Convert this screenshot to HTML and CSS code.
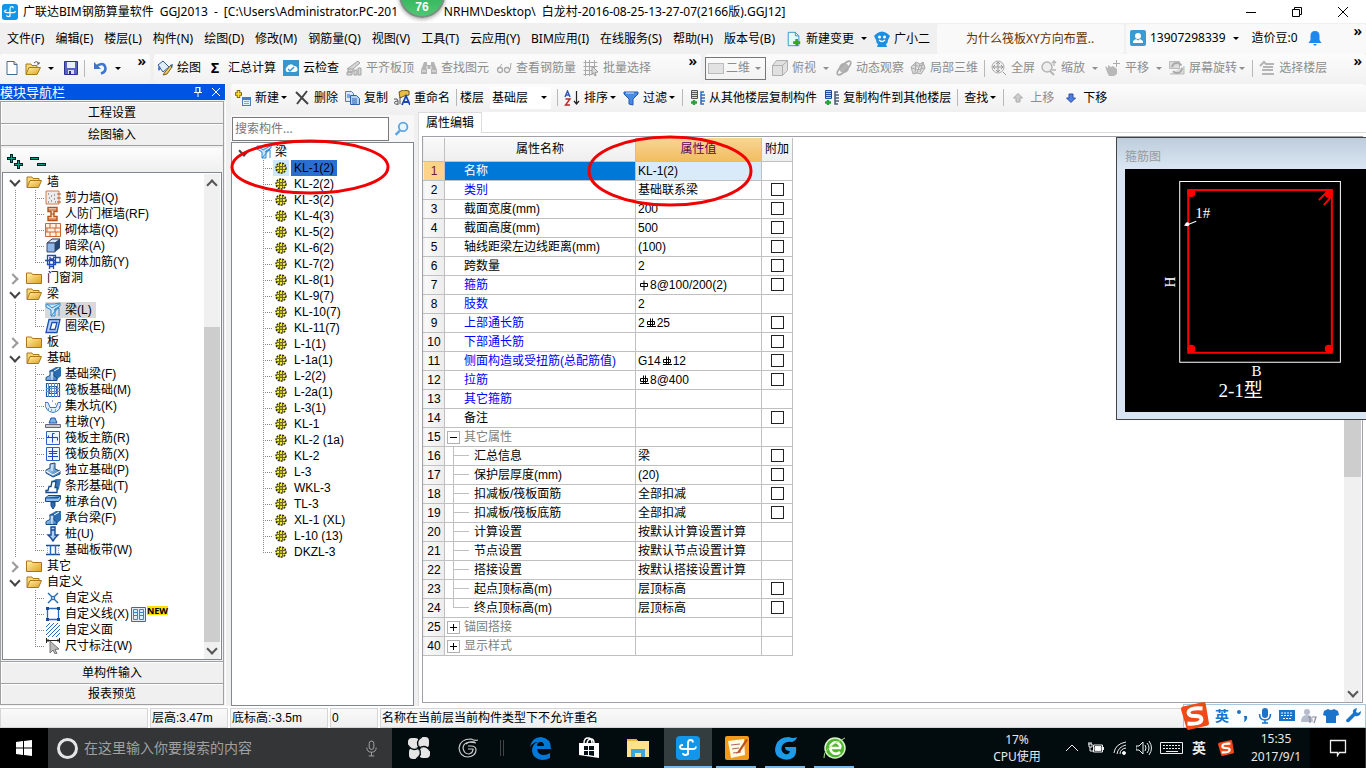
FILE: index.html
```html
<!DOCTYPE html>
<html lang="zh-CN">
<head>
<meta charset="utf-8">
<title>广联达BIM钢筋算量软件 GGJ2013</title>
<link rel="stylesheet" href="styles.css">
</head>
<body>
<svg class="defs" aria-hidden="true">
  <defs>
    <linearGradient id="gold" x1="0" y1="0" x2="1" y2="1"><stop offset="0" stop-color="#fff3a8"/><stop offset="1" stop-color="#e0a020"/></linearGradient>
    <linearGradient id="steel" x1="0" y1="0" x2="1" y2="1"><stop offset="0" stop-color="#d4ecff"/><stop offset="1" stop-color="#2c72b8"/></linearGradient>
  </defs>
  <symbol id="logo" viewBox="0 0 24 24"><rect width="24" height="24" rx="4" fill="#1296ea"/><path d="M12 19V7q0-3 2.500-3T17 6.500M12 16q0 3-2.500 3T7 17M7 9q-3 0-3 2t3 2h11q2-.5 2-2.500" fill="none" stroke="#fff" stroke-width="1.800"/></symbol>
  <symbol id="opened" viewBox="0 0 16 16"><path d="M1 13V3h5l1 1.500h6V7" fill="#f8d878" stroke="#a87818"/><path d="M1 13.500 4 6.500h11.500L12.500 13.500z" fill="url(#gold)" stroke="#a87818"/></symbol>
  <symbol id="closed" viewBox="0 0 16 16"><path d="M.5 13.500v-10.500h5l1 1.500h9v9z" fill="url(#gold)" stroke="#a87818"/></symbol>
  <symbol id="new" viewBox="0 0 16 16"><path d="M3 1.500h7l3 3v10H3z" fill="#fff" stroke="#456a94"/><path d="M10 1.500v3h3" fill="#c7d9ec" stroke="#456a94"/></symbol>
  <symbol id="open" viewBox="0 0 16 16"><path d="M1 14V4h5l1 1.500h5V8" fill="#f8d878" stroke="#a87818"/><path d="M1 14.500 4 7.500h11.500L12 14.500z" fill="url(#gold)" stroke="#a87818"/><path d="M9 3q3-3 5 1m0-2v2h-2" fill="none" stroke="#555"/></symbol>
  <symbol id="save" viewBox="0 0 16 16"><path d="M1.500 1.500h13v13H1.500z" fill="#5b62c4" stroke="#2c3290"/><path d="M4 2h8v6H4z" fill="#e7f0fb"/><path d="M5 10h6v4H5z" fill="#ddd"/><path d="M6 11h2v3H6z" fill="#2c3290"/></symbol>
  <symbol id="undo" viewBox="0 0 16 16"><path d="M4 6.500q7-5 9 0t-4 7" fill="none" stroke="#3c76ce" stroke-width="2.600"/><path d="M2 2v7h7z" fill="#3c76ce"/></symbol>
  <symbol id="draw" viewBox="0 0 16 16"><path d="M1 5 6 1l6 6-6 5z" fill="#dfeefa" stroke="#2d5d92"/><path d="M2 6q-2 3 0 5 2-2 1-5" fill="#3c76ce"/><path d="M14 5 8 12l-2 3 4-1 5-7z" fill="#f1cb62" stroke="#7c621c"/><path d="m13 5 3-1-1 4z" fill="#2d5d92"/></symbol>
  <symbol id="cloud" viewBox="0 0 16 16"><rect width="16" height="16" fill="#3596d0"/><path d="M4 12a3 3 0 0 1 0-5 4 4 0 0 1 7-1 3 3 0 0 1 1 6z" fill="#fff"/><path d="m5 9 2 2 4-4" fill="none" stroke="#3596d0" stroke-width="1.500"/></symbol>
  <symbol id="g-level" viewBox="0 0 16 16"><path d="M1 9 12 1l2 2-7 6M2 9h5v3H2zM1 12h5v3H1zM8 10h3v5H8zM12 8h3v7h-3z" fill="#d5d5d5" stroke="#a5a5a5"/></symbol>
  <symbol id="g-bino" viewBox="0 0 16 16"><path d="M3 2h3v3h4V2h3l3 8v4h-6V9H6v5H0v-4z" fill="#b4b4b4"/><path d="M6 6v3m4-3v3M1 11h4m6 0h4" stroke="#eee"/></symbol>
  <symbol id="g-glass" viewBox="0 0 16 16"><path d="M6 4 2 9m13-6-1 7" stroke="#a8a8a8"/><circle cx="4" cy="10" r="2.500" fill="none" stroke="#a8a8a8" stroke-width="1.300"/><circle cx="11" cy="10" r="2.500" fill="none" stroke="#a8a8a8" stroke-width="1.300"/></symbol>
  <symbol id="g-batch" viewBox="0 0 16 16"><path d="M.5 2.500h14M.5 6.500h14M.5 10.500h9M.5 14.500h9M2.500 0v16M6.500 0v16M11.500 0v9" stroke="#aaa"/><path d="m9 6 6 6-3 .5 1 3-1 .5-1.500-3L9 14z" fill="#ddd" stroke="#999"/></symbol>
  <symbol id="g-flat" viewBox="0 0 16 16"><rect x=".5" y="3.500" width="15" height="10" fill="#e2e2e2" stroke="#bbb"/></symbol>
  <symbol id="g-cube" viewBox="0 0 16 16"><path d="M.5 5.500h10v10H.5zl4-5h11l-5 5m5-5v10l-5 5v-10" fill="#e0e0e0" stroke="#b0b0b0"/></symbol>
  <symbol id="g-orbit" viewBox="0 0 16 16"><circle cx="8" cy="8" r="5" fill="#b5b5b5"/><ellipse cx="8" cy="8" rx="9" ry="3" transform="rotate(-45 8 8)" fill="none" stroke="#aaa" stroke-width="1.500"/></symbol>
  <symbol id="g-part" viewBox="0 0 16 16"><path d="M1 7 6 2l4 2 3-2 2 6-4 6-4-1-4 1zM6 2 5 13m5-9-3 9m6-11-3 10M1 8q7 3 14 0M3 5q5 2 11 0" fill="#ddd" stroke="#aaa"/></symbol>
  <symbol id="g-full" viewBox="0 0 16 16"><circle cx="7" cy="7" r="6" fill="#eee" stroke="#aaa"/><path d="M7 2v10M2 7h10M5 4l2-2 2 2M5 10l2 2 2-2M4 5 2 7l2 2m6-4 2 2-2 2m2 3 3 3" fill="none" stroke="#999"/></symbol>
  <symbol id="g-zoom" viewBox="0 0 16 16"><circle cx="6" cy="7" r="5" fill="#eee" stroke="#b5b5b5" stroke-width="1.500"/><path d="m9 11 4 4" stroke="#b5b5b5" stroke-width="2"/><path d="M13 1v5m-2-3 2-2 2 2m-4 7h4" fill="none" stroke="#b5b5b5" stroke-width="1.300"/></symbol>
  <symbol id="g-pan" viewBox="0 0 16 16"><path d="m0 6 3 2V5l3 2 2-1 4 3v5l-3 2H4l-2-4z" fill="#b8b8b8"/><path d="M11.500 0v7M8 3.500h7" stroke="#aaa"/></symbol>
  <symbol id="g-rot" viewBox="0 0 16 16"><path d="M.5 1.500h10v7H.5zM1 14h14V6" fill="#ddd" stroke="#bbb"/><circle cx="8" cy="8" r="5" fill="none" stroke="#aaa" stroke-width="2" stroke-dasharray="12 4"/></symbol>
  <symbol id="g-floor" viewBox="0 0 16 16"><path d="m1 6 4-4 2 2h8M4 7h10M3 10h11M3 14h12" fill="none" stroke="#b5b5b5" stroke-width="2"/></symbol>
  <symbol id="addnew" viewBox="0 0 16 16"><path d="M3.500 0v8M0 4h7" stroke="#8a6c00" stroke-width="3.500"/><path d="M3.500 1v6M1 4h5" stroke="#ffe33c" stroke-width="1.600"/><rect x="7.500" y="7.500" width="8" height="8" fill="#e5f0fd" stroke="#4a7cc0"/><path d="M8 9h7" stroke="#4a7cc0" stroke-width="2"/><path d="M9 11.500h5M9 13.500h5" stroke="#8ab"/></symbol>
  <symbol id="del" viewBox="0 0 16 16"><path d="m2 2 12 12M13 1 3 14" stroke="#444" stroke-width="2" fill="none"/></symbol>
  <symbol id="copy" viewBox="0 0 16 16"><path d="M1.500 1.500h6l2 2v8h-8z" fill="#dceafb" stroke="#4a7cc0"/><path d="M6.500 5.500h6l3 3v6h-9z" fill="#b4d2f4" stroke="#2c62b0"/><path d="M8 9h5M8 11h5M8 13h5M3 5h3M3 7h3" stroke="#2c62b0"/></symbol>
  <symbol id="ren" viewBox="0 0 16 16"><path d="M5 2 9 0l6 1v4l-5 1-4 2z" fill="#e8bd42" stroke="#715510"/><path d="m8 15 4-9 4 9m-6-3h5" fill="none" stroke="#1747b0" stroke-width="1.800"/><path d="M0 9q4-1 4 2v4M4 11q-4 0-3.500 2T4 14M6 7v7" fill="none" stroke="#555"/></symbol>
  <symbol id="az" viewBox="0 0 16 16"><path d="m1 7 2.500-6L6 7M2 5h3" fill="none" stroke="#3056b8" stroke-width="1.400"/><path d="M1.500 9H6l-4.500 6H6" fill="none" stroke="#b02a2a" stroke-width="1.400"/><path d="M12.500 1v13m-2.500-3 2.500 3 2.500-3" fill="none" stroke="#222" stroke-width="1.200"/></symbol>
  <symbol id="funnel" viewBox="0 0 16 16"><path d="M1 2h14v2l-5 5v6l-4-1V9L1 4z" fill="#4a8ae4" stroke="#2258b0"/><path d="M3 3h8" stroke="#cde4ff"/></symbol>
  <symbol id="cpf" viewBox="0 0 16 16"><path d="M2.500.5h6v8h-6z" fill="#ddd" stroke="#555"/><path d="M3 2.500h5M3 4.500h5M3 6.500h5" stroke="#555"/><path d="M5 10v5M2 12.500h6" stroke="#28a03c" stroke-width="2.400"/><path d="M15 2h-3v12h3M12 5h4m-4 3h4m-4 3h4" fill="none" stroke="#2b6cc0" stroke-width="1.500"/></symbol>
  <symbol id="cpt" viewBox="0 0 16 16"><path d="M2.500.5h6v8h-6z" fill="#b9d4ff" stroke="#2048a8"/><path d="M3 2.500h5M3 4.500h5M3 6.500h5" stroke="#2048a8"/><path d="M5 10v5M2 12.500h6" stroke="#28a03c" stroke-width="2.400"/><path d="M15 2h-3v12h3M12 5h4m-4 3h4m-4 3h4" fill="none" stroke="#4a5c78" stroke-width="1.500"/></symbol>
  <symbol id="up" viewBox="0 0 10 10"><path d="m5 .5 4.500 4.500H7v4H3V5H.5z" fill="#ccc" stroke="#aaa"/></symbol>
  <symbol id="down" viewBox="0 0 10 10"><path d="M5 9.500.5 5H3V1h4v4h2.500z" fill="#4c7fe0" stroke="#2a4fa8"/></symbol>
  <symbol id="change" viewBox="0 0 16 18"><path d="M1.500 1.500h8l4 4v11h-12z" fill="#eaf6fd" stroke="#2f8fc4"/><path d="M9.500 1.500v4h4" fill="none" stroke="#2f8fc4"/><path d="M11 9v8M7 13h8" stroke="#35a81a" stroke-width="3"/></symbol>
  <symbol id="robot" viewBox="0 0 16 16"><path d="M2 3q6-5 12 0l2 2-2 4q0 3-2 4l1 3H9H3l1-3q-2-1-2-4L0 5z" fill="#1c8fe0"/><circle cx="5.500" cy="6" r="1.500" fill="#fff"/><circle cx="10.500" cy="6" r="1.500" fill="#fff"/><path d="M5 9q3 3 6 0" stroke="#fff" fill="none" stroke-width="1.400"/></symbol>
  <symbol id="user" viewBox="0 0 16 16"><rect width="16" height="16" rx="2" fill="#3b9bd0"/><circle cx="8" cy="6" r="3" fill="#fff"/><path d="M3 13v-2l3-2 2 1.500L10 9l3 2v2z" fill="#fff"/></symbol>
  <symbol id="bell" viewBox="0 0 14 16"><path d="M7 1q4.500 0 4.500 5v4l2 3h-13l2-3V6Q2.500 1 7 1" fill="#1e88f0"/><path d="M5 14h4l-2 2z" fill="#1e88f0"/></symbol>
  <symbol id="mag" viewBox="0 0 14 14"><circle cx="8.500" cy="5.500" r="4" fill="#e8f5ff" stroke="#5aa5e4" stroke-width="1.700"/><path d="m5.500 9-4 4" stroke="#5aa5e4" stroke-width="2.200"/></symbol>
  <symbol id="t-shear" viewBox="0 0 16 16"><path d="M1 1h13v13H1z" fill="#ececec" stroke="#d27a48"/><path d="M3 4h1m2 2h1m2 3h1M4 8h1m1 3h1m3 1h1M3 12h1m5-7h1" stroke="#555"/><path d="M12 4h4m-4 4h4m-4 4h4" stroke="#b8501c"/></symbol>
  <symbol id="t-door" viewBox="0 0 16 16"><path d="M3 1.500h9v4H9v5h3v4H3v-4h3v-5H3z" fill="#fbe3cf" stroke="#b8501c" stroke-width="1.400"/><path d="M3 4h9M6 8h3m-6 5h9" stroke="#b8501c"/></symbol>
  <symbol id="t-brick" viewBox="0 0 16 16"><path d="M.5 1.500h15v13H.5zM.5 6h15M.5 10h15M5 2v4m5 0v4M5 10v4m6-12v4m-9 0v4m9 0v4" fill="#fff0e2" stroke="#c96830"/></symbol>
  <symbol id="t-dark" viewBox="0 0 16 16"><path d="m2 5 5-4h8l-5 4z" fill="#d5e8fb" stroke="#334"/><path d="M2 5h8v9H2z" fill="#8fb8e8" stroke="#446"/><path d="m10 5 5-4v9l-5 4z" fill="#27476f"/></symbol>
  <symbol id="t-rein" viewBox="0 0 16 16"><path d="M2.500 1.500h8v9h-8zM0 6.500h11M4.500 5v10M8.500 5v10M5 12.500h4M8 3.500h7v5H8M5 3v2h4" fill="none" stroke="#1d4bb5" stroke-width="1.300"/></symbol>
  <symbol id="t-beam" viewBox="0 0 16 16"><path d="M1 2h8l6-1v3l-5 3v7H6V8L1 5z" fill="#c9e6fb" stroke="#2e88d0"/><path d="m2 2 5 4 7-4M6 14 14 5M9 8l5-2v8" fill="none" stroke="#2e88d0"/></symbol>
  <symbol id="t-ring" viewBox="0 0 16 16"><path d="M4 1.500h11l-3 13H1zm3 3-2 7h5l2-7z" fill="#b8d4f5" fill-rule="evenodd" stroke="#1a4fb0" stroke-width="1.300"/></symbol>
  <symbol id="t-fb" viewBox="0 0 16 16"><path d="m4 5 7-4h5v9l-5 4" fill="#2c6cb0"/><path d="M1 14.500v-3l4-2V5h4v5l3 2v2.500z" fill="url(#steel)" stroke="#164b8a"/><path d="m9 5 5-3M7 6v8" stroke="#fff"/></symbol>
  <symbol id="t-raft" viewBox="0 0 16 16"><path d="M1.500 1.500h13v13h-13zM4.500 4.500h7v7h-7z" fill="none" stroke="#2058a8" stroke-width="1.200"/><path d="M6.500 1v14M9.500 1v14M1 6.500h14M1 9.500h14M3.500 1v14M12.500 1v14" fill="none" stroke="#5c8cd0"/></symbol>
  <symbol id="t-pit" viewBox="0 0 16 16"><path d="M0 4.500h3l2 5h6l2-5h3q0 9-8 10-8-1-8-10" fill="#dfedfb" stroke="#3578c8"/><path d="M3 11h1m2 1h1m3 0h1m-4-9h1m2 3h1m3 3h1" stroke="#2058a8"/></symbol>
  <symbol id="t-pier" viewBox="0 0 16 16"><path d="M4 9 6 4h4l2 5z" fill="#7ab0ec" stroke="#1d55a8"/><path d="M.5 10.500h15v3H.5z" fill="#c8ccd2" stroke="#667"/></symbol>
  <symbol id="t-main" viewBox="0 0 16 16"><path d="M1.500 1.500h13v13h-13z" fill="#edf5ff" stroke="#2f60c8"/><path d="M7.500 12.500v-9h2M3.500 5.500v2h9v3M2 7.500h3" fill="none" stroke="#1b48b8"/></symbol>
  <symbol id="t-neg" viewBox="0 0 16 16"><path d="M1.500 1.500h13v13h-13z" fill="#edf5ff" stroke="#2f60c8"/><path d="M7.500 2v12M3.500 5.500h9M3 10.500h10M4 7.500h8" fill="none" stroke="#1b48b8"/></symbol>
  <symbol id="t-ind" viewBox="0 0 16 16"><path d="m1 8 4-2V2l5-1v6l5 2v3l-7 3-7-4z" fill="url(#steel)" stroke="#17497f"/><path d="m1 9 7 4 7-4M7 3v6" fill="none" stroke="#fff"/></symbol>
  <symbol id="t-strip" viewBox="0 0 16 16"><path d="m6 4 5-3h5l-2 10-3 3" fill="#3a78b8"/><path d="M1 14.500v-2h2l1-4h2l1-5h4l-1 6h2v5z" fill="#fff" stroke="#164b8a" stroke-width="1.300"/></symbol>
  <symbol id="t-cap" viewBox="0 0 16 16"><path d="M.5 4 3 1.500h12.500V5l-2 2.500H.5z" fill="#8fc0ee" stroke="#174a88"/><path d="M.5 4H13l2-2M6 8v4l2 3 2-3V8z" fill="#2868b0" stroke="#174a88"/></symbol>
  <symbol id="t-pile" viewBox="0 0 16 16"><path d="M6 1h4v3H6zM6 4h4v5h3l-3 3-2 3-2-3-3-3h3z" fill="#a8d2f8" stroke="#174a98" stroke-width="1.400"/></symbol>
  <symbol id="t-slab" viewBox="0 0 16 16"><path d="M1 3.500h14M1 12.500h14" stroke="#174a98" stroke-width="1.400"/><path d="M5.500 3v10m5-10v10" stroke="#2668c0" stroke-width="1.400"/><path d="M2.500 4v8m11-8v8" stroke="#7aa8e0" stroke-dasharray="1 1"/></symbol>
  <symbol id="t-pt" viewBox="0 0 16 16"><path d="m3 3 10 10M13 3 3 13" stroke="#1f68b4" stroke-width="1.400"/><circle cx="8" cy="8" r="1.800" fill="#9be" stroke="#1f68b4"/></symbol>
  <symbol id="t-line" viewBox="0 0 16 16"><path d="M2.500 2.500h11v11h-11z" fill="none" stroke="#2668c0" stroke-width="1.300"/><path d="M1 1h3v3H1zm11 0h3v3h-3zM1 12h3v3H1zm11 0h3v3h-3z" fill="#164b9a"/></symbol>
  <symbol id="t-face" viewBox="0 0 16 16"><path d="m1 5 4-4M1 9l8-8M1 13 13 1M3 15 15 3M7 15l8-8M11 15l4-4" stroke="#2668c0"/></symbol>
  <symbol id="t-dim" viewBox="0 0 16 16"><path d="M1.500 0v5m13-5v5M2 2.500h12M3 1v3m10-3v3" stroke="#222"/><path d="m5 3 9 8-4 .5 2 4-2 .5-2-4-3 3z" fill="#bbb" stroke="#777"/></symbol>
  <symbol id="gear" viewBox="0 0 12 12"><circle cx="6" cy="6" r="5" fill="#f4ec28"/><circle cx="6" cy="6" r="5" fill="none" stroke="#222" stroke-width="1.400" stroke-dasharray="2 1"/><path d="M4.500 2v8M7.500 2v8M2 4.500h8M2 7.500h8" stroke="#6a6420"/><path d="M5.500 5.500h1v1h-1z" fill="#222"/></symbol>
  <symbol id="rebar1" viewBox="0 0 12 12"><path d="M2.500 4.500h7v3h-7zM6 1.500v10" fill="none" stroke="#000"/></symbol>
  <symbol id="rebar2" viewBox="0 0 12 12"><path d="M2.500 4.500h7v3h-7zM5.500 1.500v8M7.500 1.500v8M2 9.500h9" fill="none" stroke="#000"/></symbol>
  <symbol id="sogou" viewBox="0 0 26 26"><path d="M3 4 21 0q2 0 2 2l3 18q0 2-2 2L7 26q-2 0-2-2L0 7q0-3 3-3" fill="#f04a18"/><path d="M20 6Q7 5 7 10q0 3 6 3t6 3q0 5-13 4" fill="none" stroke="#fff" stroke-width="3.600"/></symbol>
</svg>

<div class="app">
  <header class="title">
    <svg class="i"><use href="#logo"/></svg>
    <h1><span>广联达BIM钢筋算量软件</span><span>GGJ2013</span><span>-</span><span class="path">[C:\Users\Administrator.PC-201</span><span>NRHM\Desktop\</span><span class="file">白龙村-2016-08-25-13-27-07(2166版).GGJ12]</span></h1>
    <div class="win">
      <button aria-label="最小化"><svg viewBox="0 0 10 10"><path d="M0 5.500h10"/></svg></button>
      <button aria-label="还原"><svg viewBox="0 0 10 10"><path d="M.5 2.500h7v7h-7zM2.500 2V.5h7v7H8"/></svg></button>
      <button aria-label="关闭"><svg viewBox="0 0 10 10"><path d="m0 0 10 10M10 0 0 10"/></svg></button>
    </div>
    <div class="ball">76</div>
  </header>

  <div class="menurow">
    <nav class="menu">
      <button>文件(F)</button><button>编辑(E)</button><button>楼层(L)</button><button>构件(N)</button><button>绘图(D)</button><button>修改(M)</button><button>钢筋量(Q)</button><button>视图(V)</button><button>工具(T)</button><button>云应用(Y)</button><button>BIM应用(I)</button><button>在线服务(S)</button><button>帮助(H)</button><button>版本号(B)</button>
      <button class="t"><svg class="i"><use href="#change"/></svg>新建变更<i class="dd"></i></button>
      <button class="t helper"><svg class="i"><use href="#robot"/></svg>广小二</button>
    </nav>
    <a class="tip" href="#">为什么筏板XY方向布置..</a>
    <div class="acct">
      <button class="t"><svg class="i"><use href="#user"/></svg>13907298339<i class="dd"></i></button>
      <span>造价豆:0</span>
      <svg class="i"><use href="#bell"/></svg>
      <button class="more" aria-label="更多">»</button>
    </div>
  </div>

  <div class="bars">
    <div class="bar b1">
      <button class="t" aria-label="新建"><svg class="i"><use href="#new"/></svg></button>
      <button class="t" aria-label="打开"><svg class="i"><use href="#open"/></svg><i class="dd"></i></button>
      <button class="t" aria-label="保存"><svg class="i"><use href="#save"/></svg></button>
      <i class="sep"></i>
      <button class="t" aria-label="撤销"><svg class="i"><use href="#undo"/></svg><i class="dd"></i></button>
      <button class="more" aria-label="更多">»</button>
    </div>
    <div class="bar b2">
      <button class="t"><svg class="i"><use href="#draw"/></svg>绘图</button>
      <button class="t"><b class="sum">Σ</b>汇总计算</button>
      <button class="t"><svg class="i"><use href="#cloud"/></svg>云检查</button>
      <button class="t" disabled><svg class="i"><use href="#g-level"/></svg>平齐板顶</button>
      <button class="t" disabled><svg class="i"><use href="#g-bino"/></svg>查找图元</button>
      <button class="t" disabled><svg class="i"><use href="#g-glass"/></svg>查看钢筋量</button>
      <button class="t" disabled><svg class="i"><use href="#g-batch"/></svg>批量选择</button>
      <button class="more" aria-label="更多">»</button>
    </div>
    <div class="bar b3">
      <button class="t boxed" disabled><svg class="i"><use href="#g-flat"/></svg>二维<i class="dd"></i></button>
      <button class="t" disabled><svg class="i"><use href="#g-cube"/></svg>俯视<i class="dd"></i></button>
      <button class="t" disabled><svg class="i"><use href="#g-orbit"/></svg>动态观察</button>
      <button class="t" disabled><svg class="i"><use href="#g-part"/></svg>局部三维</button>
      <i class="sep"></i>
      <button class="t" disabled><svg class="i"><use href="#g-full"/></svg>全屏</button>
      <button class="t" disabled><svg class="i"><use href="#g-zoom"/></svg>缩放<i class="dd"></i></button>
      <button class="t" disabled><svg class="i"><use href="#g-pan"/></svg>平移<i class="dd"></i></button>
      <button class="t" disabled><svg class="i"><use href="#g-rot"/></svg>屏幕旋转<i class="dd near"></i></button>
      <i class="sep"></i>
      <button class="t" disabled><svg class="i"><use href="#g-floor"/></svg>选择楼层</button>
      <button class="more" aria-label="更多">»</button>
    </div>
  </div>

  <main class="main">
    <aside class="nav">
      <div class="navtitle"><span>模块导航栏</span>
        <button aria-label="固定"><svg viewBox="0 0 10 10"><path d="M3 0v5.500M7 0v5.500M3 .5h4M1 5.500h8M5 6v4M6.500 0v5"/></svg></button>
        <button aria-label="关闭"><svg viewBox="0 0 10 10"><path d="m1 1 8 8M9 1 1 9"/></svg></button>
      </div>
      <button class="fold">工程设置</button>
      <button class="fold">绘图输入</button>
      <div class="navbox">
        <div class="navtools">
          <button aria-label="全部展开"><svg viewBox="0 0 16 16"><path d="M4.500 0v9M0 4.500h9M11.500 6v9M7 10.500h9" stroke="#022" stroke-width="3"/><path d="M4.500 1v7M1 4.500h7M11.500 7v7M8 10.500h7" stroke="#0a9a8a"/></svg></button>
          <button aria-label="全部折叠"><svg viewBox="0 0 16 16"><path d="M0 4.500h9M7 10.500h9" stroke="#022" stroke-width="3"/><path d="M1 4.500h7M8 10.500h7" stroke="#0a9a8a"/></svg></button>
        </div>
        <div class="treebox">
          <ul class="tree">
            <li class="o"><div class="n"><svg class="i"><use href="#opened"/></svg>墙</div>
              <ul>
                <li><svg class="i"><use href="#t-shear"/></svg><span>剪力墙(Q)</span></li>
                <li><svg class="i"><use href="#t-door"/></svg><span>人防门框墙(RF)</span></li>
                <li><svg class="i"><use href="#t-brick"/></svg><span>砌体墙(Q)</span></li>
                <li><svg class="i"><use href="#t-dark"/></svg><span>暗梁(A)</span></li>
                <li><svg class="i"><use href="#t-rein"/></svg><span>砌体加筋(Y)</span></li>
              </ul></li>
            <li class="c"><div class="n"><svg class="i"><use href="#closed"/></svg>门窗洞</div></li>
            <li class="o"><div class="n"><svg class="i"><use href="#opened"/></svg>梁</div>
              <ul>
                <li class="sel"><svg class="i"><use href="#t-beam"/></svg><span>梁(L)</span></li>
                <li><svg class="i"><use href="#t-ring"/></svg><span>圈梁(E)</span></li>
              </ul></li>
            <li class="c"><div class="n"><svg class="i"><use href="#closed"/></svg>板</div></li>
            <li class="o"><div class="n"><svg class="i"><use href="#opened"/></svg>基础</div>
              <ul>
                <li><svg class="i"><use href="#t-fb"/></svg><span>基础梁(F)</span></li>
                <li><svg class="i"><use href="#t-raft"/></svg><span>筏板基础(M)</span></li>
                <li><svg class="i"><use href="#t-pit"/></svg><span>集水坑(K)</span></li>
                <li><svg class="i"><use href="#t-pier"/></svg><span>柱墩(Y)</span></li>
                <li><svg class="i"><use href="#t-main"/></svg><span>筏板主筋(R)</span></li>
                <li><svg class="i"><use href="#t-neg"/></svg><span>筏板负筋(X)</span></li>
                <li><svg class="i"><use href="#t-ind"/></svg><span>独立基础(P)</span></li>
                <li><svg class="i"><use href="#t-strip"/></svg><span>条形基础(T)</span></li>
                <li><svg class="i"><use href="#t-cap"/></svg><span>桩承台(V)</span></li>
                <li><svg class="i"><use href="#t-fb"/></svg><span>承台梁(F)</span></li>
                <li><svg class="i"><use href="#t-pile"/></svg><span>桩(U)</span></li>
                <li><svg class="i"><use href="#t-slab"/></svg><span>基础板带(W)</span></li>
              </ul></li>
            <li class="c"><div class="n"><svg class="i"><use href="#closed"/></svg>其它</div></li>
            <li class="o end"><div class="n"><svg class="i"><use href="#opened"/></svg>自定义</div>
              <ul>
                <li><svg class="i"><use href="#t-pt"/></svg><span>自定义点</span></li>
                <li><svg class="i"><use href="#t-line"/></svg><span>自定义线(X)</span><svg class="book" viewBox="0 0 15 15"><path d="M.5.500h14v14H.5z" fill="#dceefc" stroke="#567"/><path d="M2.500 2.500h4v10h-4zm6 0h4v10h-4zM3 5.500h3M3 8.500h3m3-3h3m-3 3h3" fill="none" stroke="#2f86d8"/></svg><em>NEW</em></li>
                <li><svg class="i"><use href="#t-face"/></svg><span>自定义面</span></li>
                <li><svg class="i"><use href="#t-dim"/></svg><span>尺寸标注(W)</span></li>
              </ul></li>
          </ul>
          <div class="sb"><i class="au"></i><i class="thumb"></i><i class="ad"></i></div>
        </div>
      </div>
      <button class="fold">单构件输入</button>
      <button class="fold">报表预览</button>
    </aside>

    <div class="work">
      <div class="bar b4">
        <button class="t"><svg class="i"><use href="#addnew"/></svg>新建<i class="dd near"></i></button>
        <button class="t"><svg class="i"><use href="#del"/></svg>删除</button>
        <button class="t"><svg class="i"><use href="#copy"/></svg>复制</button>
        <button class="t"><svg class="i"><use href="#ren"/></svg>重命名</button>
        <i class="sep"></i>
        <label for="floor">楼层</label>
        <div class="combo"><select id="floor"><option>基础层</option></select><i class="dd"></i></div>
        <i class="sep"></i>
        <button class="t"><svg class="i"><use href="#az"/></svg>排序<i class="dd near"></i></button>
        <button class="t"><svg class="i"><use href="#funnel"/></svg>过滤<i class="dd near"></i></button>
        <i class="sep"></i>
        <button class="t"><svg class="i"><use href="#cpf"/></svg>从其他楼层复制构件</button>
        <button class="t"><svg class="i"><use href="#cpt"/></svg>复制构件到其他楼层</button>
        <i class="sep"></i>
        <button class="t">查找<i class="dd near"></i></button>
        <i class="sep"></i>
        <button class="t mv" disabled><svg class="s"><use href="#up"/></svg>上移</button>
        <button class="t mv"><svg class="s"><use href="#down"/></svg>下移</button>
      </div>

      <div class="panes">
        <section class="list">
          <div class="search"><input type="text" aria-label="搜索构件" placeholder="搜索构件..."><button aria-label="搜索"><svg><use href="#mag"/></svg></button></div>
          <div class="members">
            <div class="n root"><svg class="i"><use href="#t-beam"/></svg>梁</div>
            <ul>
              <li class="sel"><svg><use href="#gear"/></svg><span>KL-1(2)</span></li>
              <li><svg><use href="#gear"/></svg><span>KL-2(2)</span></li>
              <li><svg><use href="#gear"/></svg><span>KL-3(2)</span></li>
              <li><svg><use href="#gear"/></svg><span>KL-4(3)</span></li>
              <li><svg><use href="#gear"/></svg><span>KL-5(2)</span></li>
              <li><svg><use href="#gear"/></svg><span>KL-6(2)</span></li>
              <li><svg><use href="#gear"/></svg><span>KL-7(2)</span></li>
              <li><svg><use href="#gear"/></svg><span>KL-8(1)</span></li>
              <li><svg><use href="#gear"/></svg><span>KL-9(7)</span></li>
              <li><svg><use href="#gear"/></svg><span>KL-10(7)</span></li>
              <li><svg><use href="#gear"/></svg><span>KL-11(7)</span></li>
              <li><svg><use href="#gear"/></svg><span>L-1(1)</span></li>
              <li><svg><use href="#gear"/></svg><span>L-1a(1)</span></li>
              <li><svg><use href="#gear"/></svg><span>L-2(2)</span></li>
              <li><svg><use href="#gear"/></svg><span>L-2a(1)</span></li>
              <li><svg><use href="#gear"/></svg><span>L-3(1)</span></li>
              <li><svg><use href="#gear"/></svg><span>KL-1</span></li>
              <li><svg><use href="#gear"/></svg><span>KL-2 (1a)</span></li>
              <li><svg><use href="#gear"/></svg><span>KL-2</span></li>
              <li><svg><use href="#gear"/></svg><span>L-3</span></li>
              <li><svg><use href="#gear"/></svg><span>WKL-3</span></li>
              <li><svg><use href="#gear"/></svg><span>TL-3</span></li>
              <li><svg><use href="#gear"/></svg><span>XL-1 (XL)</span></li>
              <li><svg><use href="#gear"/></svg><span>L-10 (13)</span></li>
              <li><svg><use href="#gear"/></svg><span>DKZL-3</span></li>
            </ul>
          </div>
          <svg class="mark m1" viewBox="0 0 160 56"><ellipse cx="80" cy="28" rx="78" ry="26"/></svg>
        </section>

        <section class="editor">
          <div class="tabs"><button class="tab">属性编辑</button></div>
          <div class="sheet">
            <table>
              <colgroup><col class="c1"><col class="c2"><col class="c3"><col class="c4"></colgroup>
              <thead><tr><th></th><th>属性名称</th><th class="hot">属性值</th><th>附加</th></tr></thead>
              <tbody>
                <tr class="cur"><th>1</th><td>名称</td><td>KL-1(2)</td><td></td></tr>
                <tr class="b"><th>2</th><td>类别</td><td>基础联系梁</td><td><input type="checkbox" aria-label="类别"></td></tr>
                <tr><th>3</th><td>截面宽度(mm)</td><td>200</td><td><input type="checkbox" aria-label="截面宽度"></td></tr>
                <tr><th>4</th><td>截面高度(mm)</td><td>500</td><td><input type="checkbox" aria-label="截面高度"></td></tr>
                <tr><th>5</th><td>轴线距梁左边线距离(mm)</td><td>(100)</td><td><input type="checkbox" aria-label="轴线距离"></td></tr>
                <tr><th>6</th><td>跨数量</td><td>2</td><td><input type="checkbox" aria-label="跨数量"></td></tr>
                <tr class="b"><th>7</th><td>箍筋</td><td><svg class="rb"><use href="#rebar1"/></svg>8@100/200(2)</td><td><input type="checkbox" aria-label="箍筋"></td></tr>
                <tr class="b"><th>8</th><td>肢数</td><td>2</td><td></td></tr>
                <tr class="b"><th>9</th><td>上部通长筋</td><td>2<svg class="rb"><use href="#rebar2"/></svg>25</td><td><input type="checkbox" aria-label="上部通长筋"></td></tr>
                <tr class="b"><th>10</th><td>下部通长筋</td><td></td><td><input type="checkbox" aria-label="下部通长筋"></td></tr>
                <tr class="b"><th>11</th><td>侧面构造或受扭筋(总配筋值)</td><td>G14<svg class="rb"><use href="#rebar2"/></svg>12</td><td><input type="checkbox" aria-label="侧面构造或受扭筋"></td></tr>
                <tr class="b"><th>12</th><td>拉筋</td><td><svg class="rb"><use href="#rebar2"/></svg>8@400</td><td><input type="checkbox" aria-label="拉筋"></td></tr>
                <tr class="b"><th>13</th><td>其它箍筋</td><td></td><td></td></tr>
                <tr><th>14</th><td>备注</td><td></td><td><input type="checkbox" aria-label="备注"></td></tr>
                <tr class="g"><th>15</th><td><button class="ex open" aria-label="折叠"></button>其它属性</td><td></td><td></td></tr>
                <tr class="k"><th>16</th><td>汇总信息</td><td>梁</td><td><input type="checkbox" aria-label="汇总信息"></td></tr>
                <tr class="k"><th>17</th><td>保护层厚度(mm)</td><td>(20)</td><td><input type="checkbox" aria-label="保护层厚度"></td></tr>
                <tr class="k"><th>18</th><td>扣减板/筏板面筋</td><td>全部扣减</td><td><input type="checkbox" aria-label="扣减面筋"></td></tr>
                <tr class="k"><th>19</th><td>扣减板/筏板底筋</td><td>全部扣减</td><td><input type="checkbox" aria-label="扣减底筋"></td></tr>
                <tr class="k"><th>20</th><td>计算设置</td><td>按默认计算设置计算</td><td></td></tr>
                <tr class="k"><th>21</th><td>节点设置</td><td>按默认节点设置计算</td><td></td></tr>
                <tr class="k"><th>22</th><td>搭接设置</td><td>按默认搭接设置计算</td><td></td></tr>
                <tr class="k"><th>23</th><td>起点顶标高(m)</td><td>层顶标高</td><td><input type="checkbox" aria-label="起点顶标高"></td></tr>
                <tr class="k last"><th>24</th><td>终点顶标高(m)</td><td>层顶标高</td><td><input type="checkbox" aria-label="终点顶标高"></td></tr>
                <tr class="g"><th>25</th><td><button class="ex" aria-label="展开"></button>锚固搭接</td><td></td><td></td></tr>
                <tr class="g"><th>40</th><td><button class="ex" aria-label="展开"></button>显示样式</td><td></td><td></td></tr>
              </tbody>
            </table>
            <div class="sb sb2"><i class="thumb"></i><i class="ad"></i></div>
          </div>
          <svg class="mark m2" viewBox="0 0 166 72"><ellipse cx="83" cy="36" rx="81" ry="34"/></svg>
          <div class="stirrup">
            <div class="sttitle">箍筋图</div>
            <svg class="canvas" viewBox="0 0 240 242" preserveAspectRatio="xMinYMin">
              <path d="M54.500 12.500h160v180h-160z" fill="none" stroke="#fff"/>
              <path d="M63 21h143v162H63z" fill="none" stroke="#f00" stroke-width="2"/>
              <path d="m193 31 7-7m-2 12 7-8" stroke="#f00" stroke-width="2"/>
              <g fill="#f00"><circle cx="66" cy="24" r="4"/><circle cx="203" cy="25" r="4"/><circle cx="66" cy="179" r="4"/><circle cx="203" cy="179" r="4"/></g>
              <path d="M59 56h2l10-4" fill="none" stroke="#fff"/><circle cx="62" cy="55" r="2" fill="#fff"/>
              <text x="70" y="49">1#</text>
              <text x="126" y="206">B</text>
              <text transform="translate(50 118) rotate(-90)">H</text>
              <text class="big" x="93" y="227">2-1型</text>
            </svg>
          </div>
        </section>
      </div>
    </div>
  </main>

  <footer class="status">
    <span class="s1"></span><span class="s2">层高:3.47m</span><span class="s3">底标高:-3.5m</span><span class="s4">0</span><span class="s5">名称在当前层当前构件类型下不允许重名</span>
    <div class="ime">
      <svg class="sg"><use href="#sogou"/></svg>
      <b>英</b>
      <svg viewBox="0 0 16 16"><circle cx="4" cy="4" r="2"/><path d="M9 8h3q1 4-3 6 1-3 0-6"/></svg>
      <svg viewBox="0 0 16 16"><rect x="5" y="0" width="6" height="10" rx="3"/><path d="M2.500 6q0 6 5.500 6t5.500-6M8 12v3M5 15h6" fill="none" stroke="#1b74c9" stroke-width="1.500"/></svg>
      <svg viewBox="0 0 16 16"><path d="M0 2h16v11H0z"/><path d="M2 5h12M2 7.500h12M4 10.500h8" stroke="#fff" stroke-dasharray="2 1"/></svg>
      <svg viewBox="0 0 16 16"><g fill="#b4bccb"><circle cx="6" cy="4" r="3"/><path d="M0 14q0-7 6-7t6 7z"/></g><path d="M7 9h2v6m2-6h4l-2 6" fill="none" stroke="#889" stroke-width="1.200"/></svg>
      <svg viewBox="0 0 16 16"><path d="m1 3 4-2q3 2 6 0l4 2 1 4-3 1v7H3V8L0 7z"/></svg>
      <svg viewBox="0 0 16 16"><path d="m1 12 7-7q-1-4 4-5l-1 4 2 1 3-2q0 6-6 5l-6 6q-3 1-3-2"/></svg>
    </div>
  </footer>

  <div class="taskbar">
    <button class="start" aria-label="开始"><svg viewBox="0 0 16 16"><path d="m0 2 7-1v6.500H0zM8 1l8-1v7.500H8zM0 8.500h7V15l-7-1zm8 0h8V16l-8-1z" fill="#fff"/></svg></button>
    <div class="cortana"><i></i><input type="text" aria-label="搜索" placeholder="在这里输入你要搜索的内容"><svg viewBox="0 0 14 18"><rect x="4.500" y="1" width="5" height="9" rx="2.500"/><path d="M2 8q0 5 5 5t5-5M7 13v4M4 17h6"/></svg></div>
    <button class="app-i" aria-label="应用"><svg viewBox="0 0 24 24"><g fill="#e6e6e6"><rect x="1" y="2" width="11" height="10" rx="4"/><rect x="12" y="1" width="10" height="11" rx="4"/><rect x="2" y="12" width="10" height="11" rx="4"/><rect x="12" y="12" width="11" height="10" rx="4"/></g><path d="M12 12Q8 5 15 1M12 12q7-4 11 3M12 12q4 7-3 11M12 12q-7 4-11-3" fill="none" stroke="#020c0f" stroke-width="1.300"/></svg></button>
    <button class="app-i" aria-label="旋风"><svg viewBox="0 0 24 24" fill="none" stroke="#ccc" stroke-width="1.200"><path d="M22 4q-3 1-7-1Q4 3 3 12q1 9 9 9 8-1 8-7 0-4-5-4h-3M20 7Q8 4 7 12q1 6 6 6 4-1 4-5h-5M19 6q-6-1-9 2"/></svg></button>
    <i class="tsep"></i>
    <button class="app-i" aria-label="Edge"><svg viewBox="0 0 24 24"><path d="M2 11Q4 1 13 1q10 1 10 12H9q1 6 7 6 3 0 6-2v5q-3 2-8 2-9-1-10-9 0-7 6-9-5 0-8 5m7-1h7q0-4-3-4-4 0-4 4" fill="#0078d7"/></svg></button>
    <button class="app-i" aria-label="应用商店"><svg viewBox="0 0 24 24"><path d="M2 7h20v15L2 19z" fill="#fff"/><path d="M7 7q0-5 4-5t4 5M10 7q1-4 4-4t3 4" fill="none" stroke="#fff" stroke-width="1.500"/><path d="M7 10h4v4H7zm5 0h5v4h-5zm-5 5h4v4H7zm5 0h5v5l-5-1z" fill="#031015"/></svg></button>
    <button class="app-i" aria-label="文件资源管理器"><svg viewBox="0 0 24 24"><path d="M1 3h9l2 2h11v16H1z" fill="#ffe28a"/><path d="M1 3h9l2 2H1z" fill="#e8b83c"/><path d="M5 21v-8h14v8h-4v-4H9v4z" fill="#3aa6dc"/></svg></button>
    <button class="app-i act run" aria-label="广联达"><svg><use href="#logo"/></svg></button>
    <button class="app-i run" aria-label="笔记"><svg viewBox="0 0 24 24"><rect width="24" height="24" rx="2" fill="#f29a1c"/><path d="M3 5 19 3l1 16-14 3z" fill="#fffbe2"/><path d="m6 9 9-1m-8 5 7-1m-6 5 8-1" stroke="#a66"/><path d="m21 3-8 12-2 3 4-2 8-12z" fill="#c4511c"/></svg></button>
    <button class="app-i run" aria-label="浏览器"><svg viewBox="0 0 24 24"><path d="M23 1q-4 2-8 0Q5 1 2 9q-3 9 4 13 8 4 14-1 3-4 2-10H11q0 4 5 4-1 4-5 3-5-3-3-8 3-5 10-4 4-1 5-5" fill="#1e9be8"/></svg></button>
    <button class="app-i run" aria-label="360浏览器"><svg viewBox="0 0 24 24"><circle cx="12" cy="12" r="10" fill="#4eb72c" stroke="#d8f3cc" stroke-width="1.500"/><path d="M17 16q-3 3-7 1-4-3-2-8 4-5 8-1 2 2 1 4H8" fill="none" stroke="#fff" stroke-width="2.600"/><path d="M1 22Q-1 13 22 2" fill="none" stroke="#a2e078"/></svg></button>
    <div class="cpu"><span>17%</span><span>CPU使用</span></div>
    <div class="tray">
      <svg viewBox="0 0 16 16"><path d="m2 11 6-6 6 6"/></svg>
      <svg viewBox="0 0 16 16"><path d="M5.500 5h9v7h-9zM15.500 7v3M0 4h4v3H1V2m2 0v2M2 7v4h3"/><path d="M7 6.500h6v4H7z" fill="#fff"/></svg>
      <svg viewBox="0 0 16 16"><path d="M2 13Q3 4 14 2M5 14q1-7 9-9M8 14q0-5 6-6"/><circle cx="12" cy="13" r="1.500" fill="#fff"/></svg>
      <svg viewBox="0 0 16 16"><path d="M0 6h3l4-4v12l-4-4H0zM9 5q2 3 0 6m2-8q4 5 0 10m2-12q5 7 0 14"/></svg>
      <svg class="kb" viewBox="0 0 24 16"><path d="M.5 2.500h22v11H.5z"/><path d="M3 5.500h18M3 8.500h18" stroke-dasharray="2 1"/><path d="M6 11.500h12"/></svg>
      <b>英</b>
      <svg class="sg2"><use href="#sogou"/></svg>
    </div>
    <time><span>15:35</span><span>2017/9/1</span></time>
    <button class="note" aria-label="通知"><svg viewBox="0 0 18 18"><path d="M1.500 1.500h15v12h-6l-2 3v-3h-7z"/></svg></button>
  </div>
</div>
</body>
</html>
```
FILE: styles.css
```css
* { box-sizing: border-box; }
body { margin: 0; background: #f0f0f0; color: #000; font: 12px/16px "Noto Sans", "Noto Sans CJK SC", sans-serif; }
button, input, select { font: inherit; color: inherit; margin: 0; padding: 0; border: 0; background: none; border-radius: 0; }
ul { list-style: none; margin: 0; padding: 0; }
svg { flex: none; }
.defs { position: absolute; width: 0; height: 0; }
.i { width: 16px; height: 16px; display: block; }
.app { display: flex; flex-direction: column; height: 100vh; overflow: hidden; }

.title { position: relative; display: flex; align-items: center; height: 23px; flex: none; background: #fff; padding-left: 2px; gap: 5px; }
.title h1 { display: flex; gap: 6px; margin: 0; font-size: 12px; font-weight: 400; white-space: nowrap; flex: 1; }
.path { width: 214px; }
.win { display: flex; }
.win button { width: 46px; height: 22px; display: flex; align-items: center; justify-content: center; }
.win svg { width: 10px; height: 10px; fill: none; stroke: #000; overflow: visible; }
.ball { position: absolute; left: 399px; top: -28px; width: 46px; height: 46px; border-radius: 50%; background: linear-gradient(#1ea04a, #4cc870); border: 2px solid #7d8f84; box-shadow: 0 1px 4px #999; color: #fff; font: 700 12px/12px "Liberation Sans", sans-serif; text-align: center; padding-top: 27px; z-index: 3; }

.menurow { display: flex; height: 31px; flex: none; padding-top: 1px; gap: 2px; }
.menu { display: flex; align-items: center; gap: 11px; padding: 0 0 1px 7px; width: 935px; flex: none; white-space: nowrap; }
.helper { margin-left: -8px; }
.tip { display: flex; align-items: center; width: 187px; flex: none; padding-left: 29px; background: #f9f9f9; color: #663300; text-decoration: none; border-radius: 3px; white-space: nowrap; }
.acct { display: flex; align-items: center; flex: 1; gap: 9px; padding: 0 0 2px 4px; background: #f9f9f9; border-radius: 3px; white-space: nowrap; }
.t { display: flex; align-items: center; gap: 4px; white-space: nowrap; }
.t:disabled { color: #8d8d8d; }
.dd { width: 0; height: 0; border: 3px solid transparent; border-top-color: currentColor; border-bottom: 0; margin: 0 4px 0 3px; }
.dd.near { margin: 0 1px 0 -2px; }
.more { margin-left: auto; align-self: flex-start; font-size: 15px; line-height: 13px; font-weight: 600; padding: 0 4px; }

.bars { display: flex; gap: 4px; height: 30px; flex: none; }
.bar { display: flex; align-items: center; gap: 7px; background: linear-gradient(#fcfcfc, #f1f1f1); border-radius: 3px; white-space: nowrap; }
.bars .bar { padding-bottom: 2px; }
.b1 { width: 150px; padding-left: 4px; gap: 5px; flex: none; }
.b1 .sep { margin-right: 2px; }
.b2 { width: 547px; padding-left: 3px; flex: none; }
.b3 { flex: 1; gap: 6px; }
.b3 .t:not(.boxed) .dd:not(.near) { margin-right: 1px; }
.sum { width: 14px; font-size: 14px; text-align: center; }
.b2 .t:nth-child(2) { gap: 6px; }
.sep { width: 1px; height: 17px; background: #b8b8b8; }
.boxed { border: 1px solid #777; height: 23px; padding-left: 2px; gap: 2px; }

.main { display: flex; flex: 1; min-height: 0; gap: 5px; }
.nav { width: 226px; flex: none; display: flex; flex-direction: column; border-right: 1px solid #fff; }
.navtitle { display: flex; align-items: center; height: 16px; flex: none; background: #0054e3; color: #fff; font-size: 13px; }
.navtitle span { flex: 1; }
.navtitle button { width: 18px; display: flex; justify-content: center; }
.navtitle svg { width: 10px; height: 10px; fill: none; stroke: #fff; }
.fold { height: 22px; flex: none; border: 1px solid #a0a0a0; border-bottom-width: 0; background: #f0f0f0; margin-right: 1px; box-shadow: inset 1px 1px #fff; }
.fold:nth-of-type(1) { margin-top: 1px; }
.fold:last-child { border-bottom-width: 1px; margin-bottom: 1px; }
.navbox { flex: 1; min-height: 0; display: flex; flex-direction: column; border: 1px solid #a0a0a0; border-bottom: 0; padding: 2px 1px 1px; margin-right: 1px; }
.navtools { display: flex; gap: 7px; height: 24px; flex: none; padding: 3px 0 0 5px; background: linear-gradient(#fdfdfd, #efefef); }
.navtools svg { width: 16px; height: 16px; display: block; fill: none; }
.treebox { flex: 1; min-height: 0; display: flex; background: #fff; border: 1px solid #828790; padding-top: 1px; }
.tree, .members, table, .status, .fold, .tab { font-family: "Liberation Sans", "Noto Sans CJK SC", sans-serif; }
.tree { flex: 1; white-space: nowrap; }
.n { position: relative; display: flex; align-items: center; gap: 5px; height: 16px; padding-left: 23px; }
.o > .n::before, .c > .n::before, .root::before { content: ""; position: absolute; left: 8px; top: 3px; width: 6px; height: 6px; border: solid #444; border-width: 0 2px 2px 0; transform: rotate(45deg); }
.c > .n::before { left: 6px; top: 5px; border-color: #999; transform: rotate(-45deg); }
.tree ul { padding-left: 32px; background: repeating-linear-gradient(#888 0 1px, #fff 1px 2px) 12px 0 / 1px 100% no-repeat; }
.tree .end ul { background: none; }
.tree ul li, .members li { display: flex; align-items: center; height: 16px; background: repeating-linear-gradient(#888 0 1px, transparent 1px 2px) 0 0 / 1px 100% no-repeat; }
.tree ul li:last-child, .members li:last-child { background-size: 1px 50%; }
.tree ul li::before, .members li::before { content: ""; width: 10px; height: 1px; background: repeating-linear-gradient(90deg, #888 0 1px, transparent 1px 2px); }
.tree ul span { padding: 0 4px; }
.tree .sel .i, .tree .sel span { background-color: #d9d9d9; }
.book { width: 15px; height: 15px; margin-left: -2px; }
.tree em { font: 700 9px/9px "Noto Sans", sans-serif; background: #ffe000; margin: 0 0 8px 1px; }
.sb { width: 17px; display: flex; flex-direction: column; background: #f0f0f0; }
.tree + .sb { width: 16px; margin: 0 1px; }
.sb .thumb { background: #cdcdcd; }
.tree + .sb .thumb { margin-top: 136px; flex: 1; }
.au, .ad { height: 17px; display: flex; align-items: center; justify-content: center; }
.au::before, .ad::before { content: ""; width: 6px; height: 6px; border: solid #555; border-width: 0 2px 2px 0; transform: translateY(-2px) rotate(45deg); }
.au::before { transform: translateY(2px) rotate(225deg); }

.work { flex: 1; min-width: 0; display: flex; flex-direction: column; }
.b4 { height: 26px; flex: none; padding: 1px 0 0 4px; gap: 6px; }
.b4 .sep + label { margin-left: -3px; }
.combo { display: flex; align-items: center; height: 22px; background: #fff; width: 61px; }
.combo select { appearance: none; flex: 1; min-width: 0; padding-left: 2px; }
.s { width: 10px; height: 10px; }
.mv { gap: 7px; padding: 0 3px; }
.panes { flex: 1; min-height: 0; display: flex; gap: 4px; }
.list { position: relative; width: 183px; flex: none; display: flex; flex-direction: column; margin-top: 5px; }
.search { display: flex; align-items: center; height: 27px; flex: none; padding-left: 1px; gap: 5px; background: #f7f7f7; }
.search input { width: 157px; height: 24px; border: 1px solid #7a7a7a; background: #fff; padding-left: 2px; }
.search input::placeholder { color: #777; opacity: 1; }
.search svg { width: 15px; height: 15px; display: block; }
.members { flex: 1; background: #fff; border: 1px solid #828790; padding-top: 1px; }
.members .n { gap: 3px; padding-left: 24px; }
.members ul { padding-left: 31px; }
.members li svg { width: 12px; height: 12px; margin: 0 4px 0 2px; }
.members li span { padding: 0 3px; }
.members .sel span { background: #2a6fcf; color: #000; margin-right: 2px; }
.members .sel svg { outline: 2px solid #cce8ff; background: #cce8ff; }
.mark { position: absolute; pointer-events: none; z-index: 2; fill: none; stroke: #f00000; stroke-width: 3; }
.m1 { left: -1px; top: 24px; width: 160px; height: 56px; }
.m2 { left: 168px; top: 23px; width: 166px; height: 72px; }

.editor { position: relative; flex: 1; min-width: 0; display: flex; flex-direction: column; background: #fff; margin-top: 2px; border-left: 1px solid #dcdcdc; }
.tabs { height: 21px; flex: none; border-bottom: 1px solid #dcdcdc; }
.tab { width: 63px; height: 21px; background: #fff; border: solid #dcdcdc; border-width: 1px 1px 0 0; }
.sheet { flex: 1; min-height: 0; display: flex; justify-content: space-between; margin: 3px; border: 1px solid #a0a0a8; padding: 1px 1px 0 0; }
table { border-collapse: collapse; table-layout: fixed; width: 370px; align-self: flex-start; }
.c1 { width: 21px; } .c2 { width: 191px; } .c3 { width: 126px; } .c4 { width: 31px; }
th, td { border: 1px solid #c0c0c0; padding: 0; height: 19px; line-height: 16px; white-space: nowrap; font-weight: 400; }
th { background: linear-gradient(90deg, #fafafa, #ececec); border-left-color: #eee; }
thead th { height: 23px; background: linear-gradient(#fafafa, #eee); border-top: 0; }
thead .hot { background: linear-gradient(#f8d596, #f1bd60); color: #600060; }
td:nth-child(2) { padding-left: 19px; }
td:nth-child(3) { padding-left: 2px; }
td:nth-child(4) { text-align: center; }
.b td:nth-child(2) { color: #00f; }
.cur th { background: #ffd28a; color: #702030; }
.cur td:nth-child(2) { background: #0078d7; color: #fff; }
.cur td:nth-child(3) { background: #d9eaf9; }
.g td:nth-child(2) { padding-left: 2px; color: #808080; }
.k td:nth-child(2) { padding-left: 29px; background: linear-gradient(#c0c0c0, #c0c0c0) 8px 0 / 1px 100% no-repeat, linear-gradient(#c0c0c0, #c0c0c0) 8px 50% / 16px 1px no-repeat; }
.k.last td:nth-child(2) { background-size: 1px 50%, 16px 1px; }
td input { appearance: none; display: block; width: 13px; height: 13px; border: 1px solid #222; margin: 0 auto; background: #fff; }
.ex { display: inline-block; width: 13px; height: 13px; border: 1px solid #b0b0b0; margin-right: 4px; vertical-align: middle; background: linear-gradient(#000, #000) 50% / 7px 1px no-repeat, linear-gradient(#000, #000) 50% / 1px 7px no-repeat; }
.ex.open { background: linear-gradient(#000, #000) 50% / 7px 1px no-repeat; }
.rb { width: 12px; height: 12px; vertical-align: -2px; }
.sb2 { width: 17px; justify-content: flex-end; }
.sb2 .thumb { height: 57px; margin-bottom: 208px; }

.stirrup { position: absolute; left: 697px; right: 0; top: 25px; height: 283px; border: 1px solid #444; border-right: 0; background: linear-gradient(#becddc, #d9e5f2 30px); padding: 0 0 7px 8px; display: flex; flex-direction: column; z-index: 1; }
.sttitle { height: 31px; flex: none; padding-top: 11px; color: #9a9a9a; line-height: 16px; }
.canvas { flex: 1; min-height: 0; background: #000; }
.canvas text { fill: #fff; font: 15px "Liberation Serif", "Noto Sans CJK SC", serif; }
.canvas .big { font-size: 19px; }

.status { position: relative; display: flex; align-items: stretch; height: 22px; flex: none; gap: 2px; padding-top: 2px; background: #fff; }
.status span { border: 1px solid #d5d5d5; background: linear-gradient(#fafafa, #efefef); padding: 1px 1px 0; white-space: nowrap; }
.s1 { width: 148px; } .s2 { width: 78px; } .s3 { width: 98px; } .s4 { width: 48px; } .s5 { flex: 1; }
.ime { position: absolute; right: 0; top: -2px; width: 183px; height: 24px; background: #fbfdff; border: 1px solid #a8c8e0; display: flex; align-items: center; gap: 6px; z-index: 3; color: #1b74c9; }
.ime svg { width: 16px; height: 16px; fill: #1b74c9; }
.ime .sg { width: 28px; height: 28px; margin-left: -3px; }
.ime b, .tray b { font-size: 14px; }

.taskbar { display: flex; height: 40px; flex: none; background: #020c0f; color: #e8e8e8; }
.start { width: 48px; flex: none; background: #000; display: flex; align-items: center; justify-content: center; }
.start svg { width: 16px; height: 16px; }
.cortana { width: 344px; flex: none; display: flex; align-items: center; background: #333536; padding: 0 14px 0 9px; gap: 6px; }
.cortana i { width: 21px; height: 21px; border: 3px solid #e5e5e5; border-radius: 50%; }
.cortana input { flex: 1; min-width: 0; font-size: 14px; }
.cortana input::placeholder { color: #a0a0a0; opacity: 1; }
.cortana svg { width: 13px; height: 17px; fill: none; stroke: #aaa; }
.app-i { width: 49px; flex: none; display: flex; align-items: center; justify-content: center; padding-left: 4px; }
.app-i svg { width: 24px; height: 24px; }
.run { background: linear-gradient(#76b9ed, #76b9ed) 4px 100% / 40px 2px no-repeat; padding-left: 0; }
.act { width: 48px; background: linear-gradient(#76b9ed, #76b9ed) 0 100% / 100% 2px no-repeat #333c3f; margin-left: 4px; }
.tsep { width: 4px; height: 16px; border: solid #444; border-width: 0 1px; margin: 12px 9px 0 10px; }
.cpu { flex: none; margin: 0 5px 0 auto; width: 56px; display: flex; flex-direction: column; text-align: center; padding-top: 3px; line-height: 17px; }
.tray { flex: none; display: flex; align-items: center; gap: 8px; padding-left: 14px; width: 192px; }
.tray svg { width: 16px; height: 16px; fill: none; stroke: #eee; }
.tray .kb { width: 24px; }
.tray .sg2 { stroke: none; margin-left: 4px; }
time { flex: none; display: flex; flex-direction: column; width: 68px; text-align: center; padding-top: 2px; line-height: 18px; }
.note { flex: none; width: 56px; background: #000; display: flex; align-items: center; justify-content: center; border-right: 1px solid #333; }
.note svg { width: 18px; height: 18px; fill: none; stroke: #eee; stroke-width: 1.300; }
```
